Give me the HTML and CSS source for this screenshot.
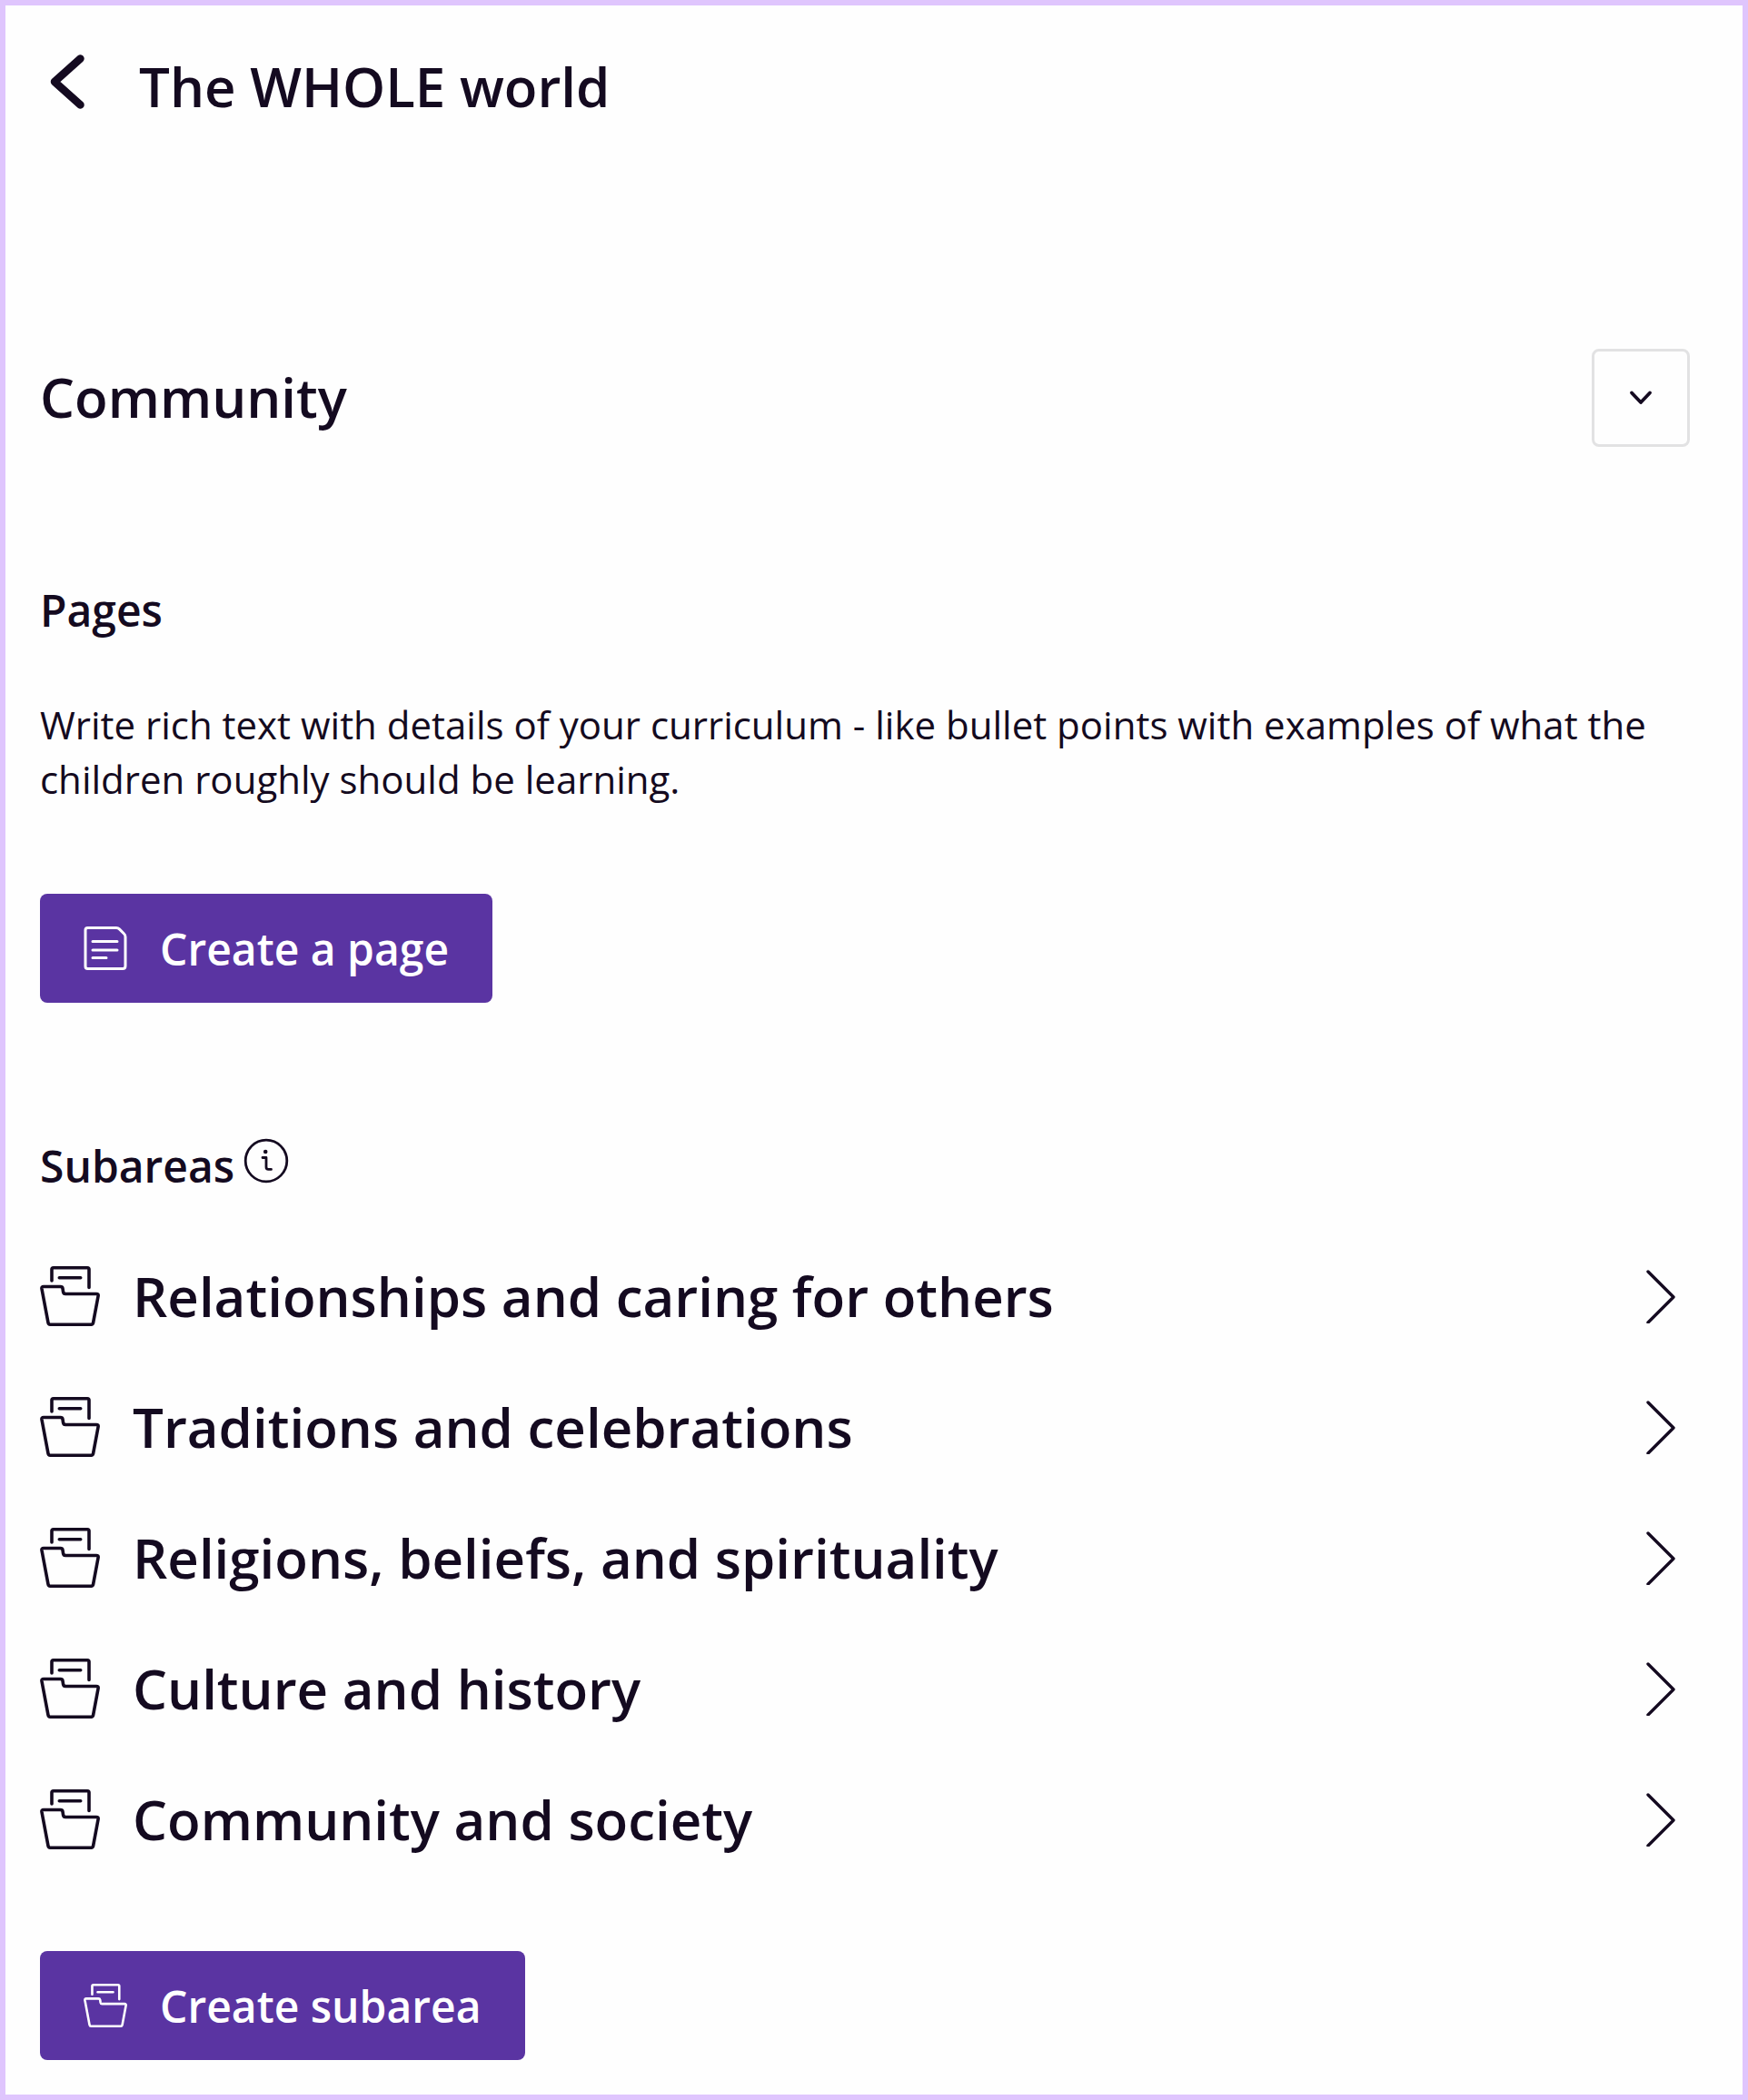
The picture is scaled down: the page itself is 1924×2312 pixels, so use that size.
FILE: index.html
```html
<!DOCTYPE html>
<html lang="en">
<head>
    <meta charset="UTF-8">
    <title>The WHOLE world</title>
    <link rel="stylesheet" href="styles.css">
</head>
<body>
<svg class="symbols">
    <symbol id="folder" viewBox="0 0 66 66">
        <path d="M13 16V3.6Q13 1.8 14.8 1.8H52.2Q54 1.8 54 3.6V23.5M21.3 12.7H44.7"/>
        <path d="M4 22.5H22.5Q24.6 22.5 25 24.4L25.6 28.4Q26 30.5 28 30.5H62Q64.5 30.5 64.1 32.8L58.6 62.2Q58.2 64.2 56.4 64.2H11.2Q9.4 64.2 9 62.2L2 25Q1.6 22.5 4 22.5Z"/>
    </symbol>
    <symbol id="arrow" viewBox="0 0 32 60">
        <path d="M2 3L30 31L2 59"/>
    </symbol>
</svg>
<div class="page">
    <div class="header">
        <svg class="back" viewBox="0 0 38 60"><path d="M33.5 4.5L5 30L33.5 55.5"/></svg>
        <h1>The WHOLE world</h1>
    </div>
    <div class="area">
        <h1>Community</h1>
        <button class="toggle">
            <svg viewBox="0 0 24 16"><path d="M2 2.5L12 13L22 2.5"/></svg>
        </button>
    </div>
    <h2 class="pages">Pages</h2>
    <p>Write rich text with details of your curriculum - like bullet points with examples of what the children roughly should be learning.</p>
    <button class="btn">
        <svg viewBox="0 0 48 48">
            <path d="M4.5 1.5H36Q38 1.5 39.4 2.9L44.5 8Q46 9.4 46 11.4V43.5Q46 46.5 43 46.5H4.5Q2 46.5 2 44V4Q2 1.5 4.5 1.5ZM10 16.5H37M10 26H37M10 34.5H25"/>
        </svg>
        <span>Create a page</span>
    </button>
    <h2 class="subareas">Subareas
        <svg class="info" viewBox="0 0 48 48">
            <circle cx="24" cy="24" r="22.8"/>
            <path d="M20 20.5H24V31Q24 33.4 26.4 33.4H29.5"/>
            <circle class="dot" cx="23.2" cy="14" r="2.3"/>
        </svg>
    </h2>
    <ul class="list">
        <li><svg class="folder"><use href="#folder"/></svg><span>Relationships and caring for others</span><svg class="arrow"><use href="#arrow"/></svg></li>
        <li><svg class="folder"><use href="#folder"/></svg><span>Traditions and celebrations</span><svg class="arrow"><use href="#arrow"/></svg></li>
        <li><svg class="folder"><use href="#folder"/></svg><span>Religions, beliefs, and spirituality</span><svg class="arrow"><use href="#arrow"/></svg></li>
        <li><svg class="folder"><use href="#folder"/></svg><span>Culture and history</span><svg class="arrow"><use href="#arrow"/></svg></li>
        <li><svg class="folder"><use href="#folder"/></svg><span>Community and society</span><svg class="arrow"><use href="#arrow"/></svg></li>
    </ul>
    <button class="btn">
        <svg><use href="#folder"/></svg>
        <span>Create subarea</span>
    </button>
</div>
</body>
</html>
```
FILE: styles.css
```css
body{
    margin: 0;
    font-family: "Open Sans", sans-serif;
    color: #140a20;
}
.page{
    box-sizing: border-box;
    height: 2312px;
    border: 6px solid #dfc5fd;
    padding: 51px 58px 0 38px;
    background-color: #fefefe;
}
svg{
    fill: none;
    stroke: #140a20;
    stroke-width: 3.6;
    stroke-linecap: round;
    stroke-linejoin: round;
    flex: none;
    overflow: visible;
}
.symbols{
    display: none;
}
h1, h2, p, ul{
    margin: 0;
    padding: 0;
}
h1, .list li{
    font-size: 60px;
    font-weight: 600;
    line-height: 76px;
}
h2{
    font-size: 48px;
    font-weight: 600;
    line-height: 68px;
}
.header{
    display: flex;
    height: 76px;
    padding-left: 11px;
}
.back{
    width: 38px;
    height: 60px;
    margin: 3px 60px 0 0;
    stroke-width: 8.5;
}
.area{
    display: flex;
    align-items: center;
    justify-content: space-between;
    height: 108px;
    margin-top: 251px;
}
.area h1{
    padding-bottom: 2px;
}
.toggle{
    display: flex;
    align-items: center;
    justify-content: center;
    box-sizing: border-box;
    width: 108px;
    height: 108px;
    padding: 0;
    border: 3px solid #e2e2e3;
    border-radius: 8px;
    background-color: #fefefe;
}
.toggle svg{
    width: 24px;
    height: 16px;
    stroke-width: 3.8;
}
.pages{
    margin-top: 146px;
}
p{
    margin-top: 62px;
    font-size: 42px;
    line-height: 60px;
}
.btn{
    display: flex;
    align-items: center;
    gap: 36px;
    height: 120px;
    padding: 0 48px;
    border: none;
    border-radius: 8px;
    background-color: #5a34a2;
    color: #ffffff;
    font-family: inherit;
    font-size: 48px;
    font-weight: 600;
    margin-top: 96px;
}
.btn svg{
    width: 48px;
    height: 48px;
    stroke: #ffffff;
    stroke-width: 3;
}
.subareas{
    display: flex;
    gap: 11px;
    margin-top: 146px;
}
.info{
    width: 48px;
    height: 48px;
    margin-top: 4px;
    stroke-width: 2.8;
}
.info .dot{
    fill: #140a20;
    stroke: none;
}
.list{
    margin-top: 37px;
    list-style: none;
}
.list li{
    display: flex;
    align-items: center;
    height: 144px;
}
.list span{
    flex: 1;
}
.folder{
    width: 66px;
    height: 66px;
    margin-right: 36px;
}
.arrow{
    width: 32px;
    height: 60px;
    margin-right: 16px;
    stroke-width: 3.4;
}
.list + .btn{
    margin-top: 73px;
}
.list + .btn svg{
    stroke-width: 3.6;
}
```
